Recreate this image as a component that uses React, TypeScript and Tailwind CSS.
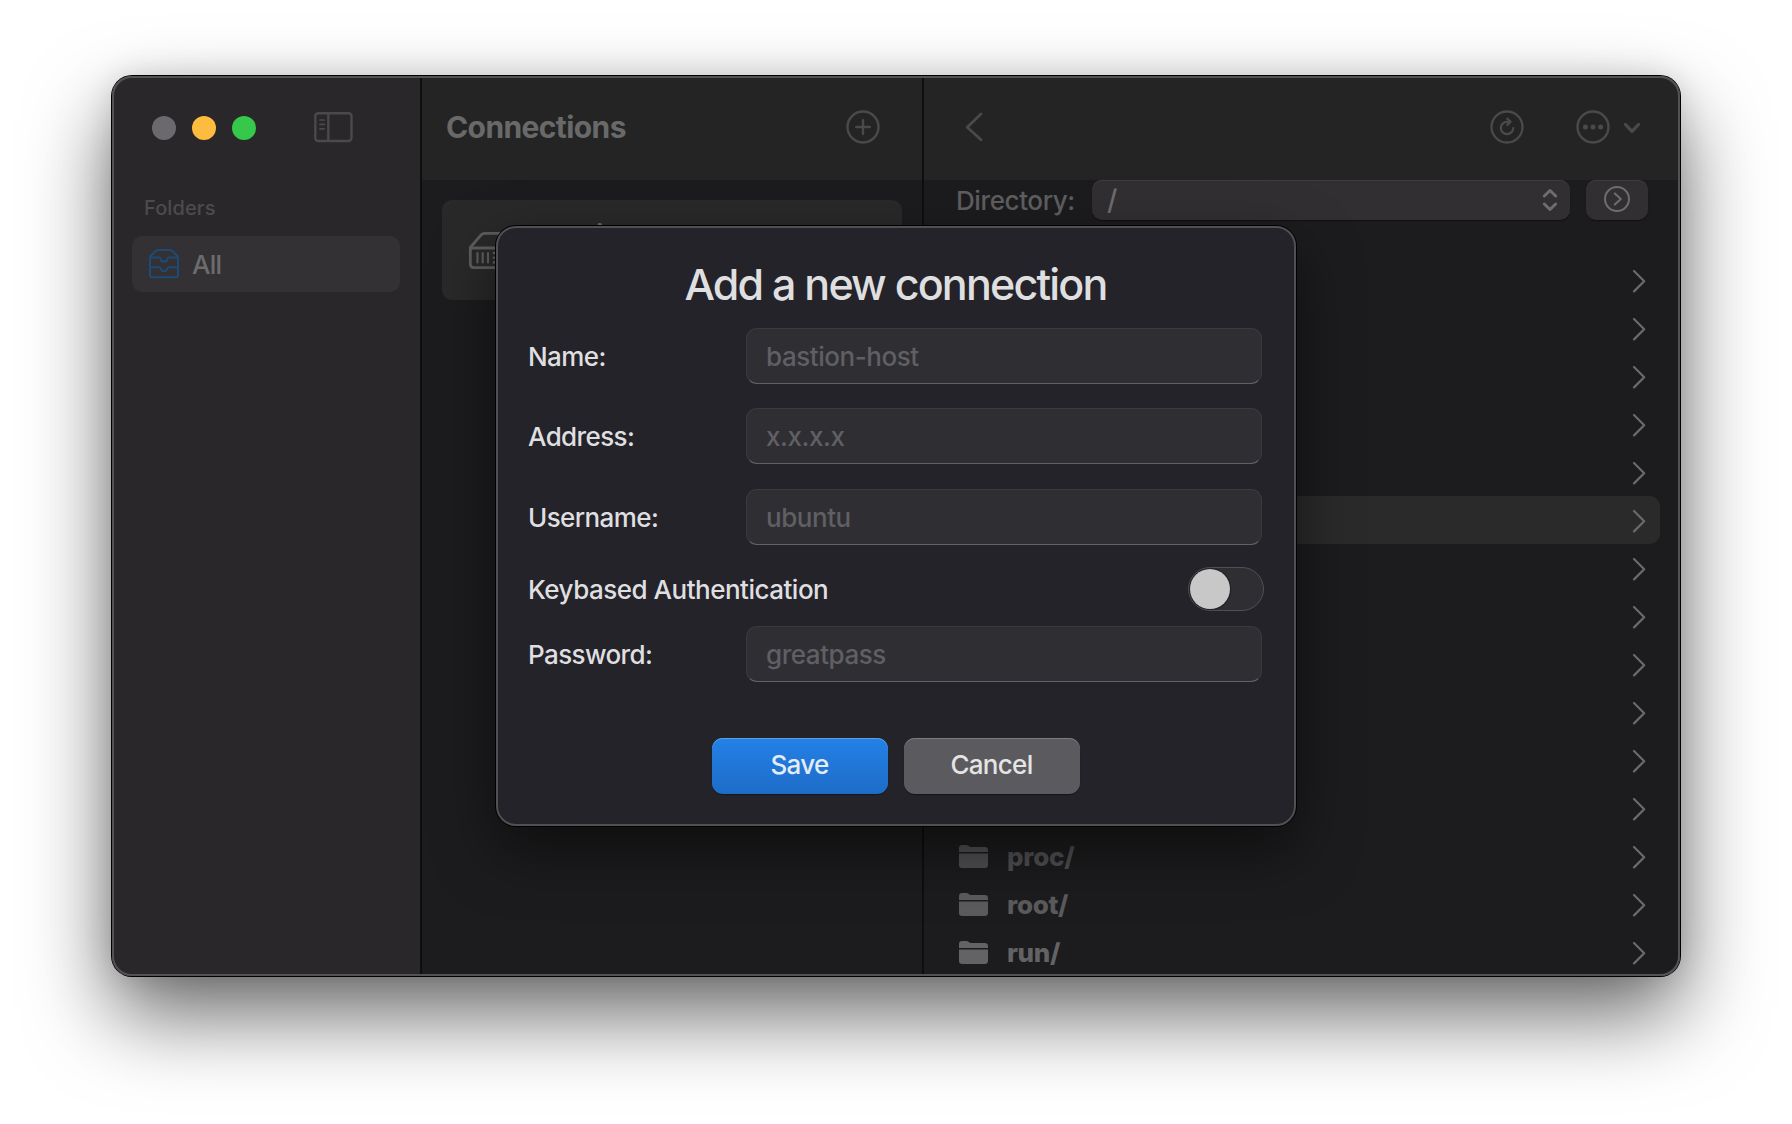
import type { ReactNode } from "react";

const stroke = {
  fill: "none",
  stroke: "currentColor",
  strokeLinecap: "round" as const,
  strokeLinejoin: "round" as const,
};

function SidebarIcon() {
  return (
    <svg width="40" height="32" viewBox="0 0 40 32" strokeWidth="2.4" {...stroke} className="text-[#4b494c]">
      <rect x="2.3" y="2.2" width="36.2" height="27.8" rx="3" />
      <path d="M15.300 2.2v27.8" strokeLinecap="butt" />
      <path d="M7 9h4.2M7 13.4h4.2M7 17.8h4.2" strokeWidth="1.7" />
    </svg>
  );
}

function TrayIcon() {
  return (
    <svg width="32" height="32" viewBox="0 0 32 32" strokeWidth="2.100" {...stroke} className="text-[#1f4a75]">
      <path d="M2 8.500 8 2.800Q9 2 10.300 2H21.700Q23 2 24 2.800L30 8.500V26.500Q30 29.200 27.300 29.200H4.700Q2 29.200 2 26.500Z" />
      <path d="M2 9.500h9.500c.6 0 .8.500.9 1.100.3 1.700 1.700 3 3.600 3s3.300-1.300 3.600-3c.1-.6.300-1.100.9-1.100H30" />
      <path d="M2 19.300h9.500c.6 0 .8.500 1 1 .5 1.700 1.800 2.900 3.500 2.900s3-1.200 3.500-2.900c.2-.5.400-1 1-1H30" />
    </svg>
  );
}

function PlusCircle() {
  return (
    <svg width="36" height="36" viewBox="0 0 36 36" strokeWidth="2.400" {...stroke} className="text-[#4a4a4b]">
      <circle cx="18" cy="18" r="15.500" />
      <path d="M18 11.200v13.600M11.200 18h13.600" />
    </svg>
  );
}

function RefreshCircle() {
  return (
    <svg width="36" height="36" viewBox="0 0 36 36" strokeWidth="2.300" {...stroke} className="text-[#4a4a4b]">
      <circle cx="18" cy="18" r="15.500" />
      <path d="M24.200 19a6.200 6.200 0 1 1-6.200-6.200h3" strokeWidth="2.200" />
      <path d="m18.200 9.600 3.400 3.200-3.400 3.300" strokeWidth="2.200" />
    </svg>
  );
}

function MoreCircle() {
  return (
    <svg width="36" height="36" viewBox="0 0 36 36" strokeWidth="2.400" {...stroke} className="text-[#4a4a4b]">
      <circle cx="18" cy="18" r="15.500" />
      <g fill="currentColor" stroke="none">
        <circle cx="10.400" cy="18" r="2.500" />
        <circle cx="18" cy="18" r="2.500" />
        <circle cx="25.600" cy="18" r="2.500" />
      </g>
    </svg>
  );
}

function ServerIcon() {
  return (
    <svg width="52" height="40" viewBox="0 0 52 40" strokeWidth="2.800" {...stroke} className="text-[#5d5d5e]">
      <path d="M2.300 17.500 12.300 5.800Q14 3.300 17 3.300H35Q38 3.300 39.700 5.800L49.700 17.500V34Q49.700 37.700 46 37.700H6Q2.300 37.700 2.300 34Z" />
      <path d="M2.300 18h47.400" />
      <path d="M9.500 23v9.500M14.700 23v9.500M20 23v9.500" strokeWidth="2.200" />
      <path d="M26 23v.1M26 27.700v.1M26 32.300v.1" strokeWidth="2.600" />
    </svg>
  );
}

function FolderIcon() {
  return (
    <svg className="mt-[2px]" width="29" height="24" viewBox="0 0 29 24" fill="currentColor">
      <path d="M0 7V3.200Q0 0 3.200 0H7.400Q8.800 0 9.800.900L10.500 1.500Q11.300 2 12.500 2H25.800Q29 2 29 5.200V7Z" />
      <path d="M0 8.600H29V19.800Q29 23 25.800 23H3.200Q0 23 0 19.800Z" />
    </svg>
  );
}

function RowChevron() {
  return (
    <svg width="14" height="24" viewBox="0 0 14 24" strokeWidth="2.200" {...stroke} className="ml-auto mt-[2px] text-[#6a696b]">
      <path d="m2 2 10.200 10.200L2 22.400" />
    </svg>
  );
}

function FileRow({ name, selected, tone }: { name?: string; selected?: boolean; tone: string }) {
  return (
    <div
      className={
        "flex h-12 shrink-0 items-center rounded-[10px] pl-[19px] pr-[14px] " + (selected ? "bg-[#2a2a2b] " : "") + tone
      }
    >
      <FolderIcon />
      {name && <span className="ml-[19px] text-[26px] font-extrabold tracking-[-0.3px]">{name}</span>}
      <RowChevron />
    </div>
  );
}

function Field({ label, placeholder }: { label: string; placeholder: string }) {
  return (
    <label className="flex h-14 items-center">
      <span className="w-[218px] pt-[2px] text-[26px] font-[450] leading-8 tracking-[-0.6px]">{label}</span>
      <input
        placeholder={placeholder}
        className="h-14 w-[516px] rounded-[11px] border border-[#3b3a3e] border-b-[#626166] bg-[#2f2e33] px-[19px] text-[26px] font-[450] tracking-[-0.45px] outline-none placeholder:text-[#605f64]"
      />
    </label>
  );
}

function PushButton({ primary, children }: { primary?: boolean; children: ReactNode }) {
  return (
    <button
      className={
        "h-14 w-44 rounded-[11px] pb-[4px] pr-px text-[26px] font-[450] tracking-[-0.7px] " +
        (primary
          ? "bg-linear-to-b from-[#2381e6] to-[#1e6cc8] text-[#e3ecf7] shadow-[inset_0_1px_0_#5b9fe8,0_1px_1px_rgba(0,0,0,0.4)]"
          : "bg-[#5b5a5e] text-[#e4e4e5] shadow-[inset_0_1px_0_#7c7b7f,0_1px_1px_rgba(0,0,0,0.4)]")
      }
    >
      {children}
    </button>
  );
}

function ConnectionDialog() {
  return (
    <div className="absolute left-[384px] top-[150px] flex h-[600px] w-[800px] flex-col rounded-[20px] border-2 border-[#505053] bg-[#242329] px-[30px] text-[#dfdfe0] shadow-[0_0_0_1px_#000,0_24px_60px_rgba(0,0,0,0.5)]">
      <h2 className="mt-[29px] h-[57px] pr-px text-center text-[43px] font-[450] leading-[54px] tracking-[-1.8px]">
        Add a new connection
      </h2>
      <div className="mt-[14px]">
        <Field label="Name:" placeholder="bastion-host" />
      </div>
      <div className="mt-6">
        <Field label="Address:" placeholder="x.x.x.x" />
      </div>
      <div className="mt-[25px]">
        <Field label="Username:" placeholder="ubuntu" />
      </div>
      <div className="mt-[22px] flex h-11 w-[736px] items-center justify-between">
        <span className="pt-[2px] text-[26px] font-[450] leading-8 tracking-[-0.5px]">Keybased Authentication</span>
        <span className="flex h-11 w-[76px] items-center rounded-full border border-[#504f53] bg-[#2f2e33] pl-px">
          <span className="size-10 rounded-full bg-[#c8c8c8] shadow-[0_0_2px_#000]" />
        </span>
      </div>
      <div className="mt-[15px]">
        <Field label="Password:" placeholder="greatpass" />
      </div>
      <div className="mt-14 flex justify-center gap-4">
        <PushButton primary>Save</PushButton>
        <PushButton>Cancel</PushButton>
      </div>
    </div>
  );
}

const files: { name?: string; tone: string }[] = [
  ...Array.from({ length: 12 }, () => ({ tone: "text-[#5d5c5f]" })),
  { name: "proc/", tone: "text-[#504f51]" },
  { name: "root/", tone: "text-[#5b5a5d]" },
  { name: "run/", tone: "text-[#636265]" },
];

export default function App() {
  return (
    <div className="h-[1124px] w-[1792px] overflow-hidden bg-white pl-[112px] pt-[76px] font-['Inter',sans-serif]">
      <div className="relative h-[900px] w-[1568px] rounded-[20px] shadow-[0_0_0_1px_#000,0_38px_84px_rgba(0,0,0,0.6),0_0_30px_rgba(0,0,0,0.12)]">
        <div className="flex h-full w-full overflow-hidden rounded-[20px] bg-[#1c1c1e]">
          <aside className="flex w-[308px] shrink-0 flex-col bg-[#29272a] px-5">
            <div className="flex h-[104px] items-center gap-4 pl-5">
              <span className="size-6 rounded-full bg-[#6b696d]" />
              <span className="size-6 rounded-full bg-[#fdbb40]" />
              <span className="size-6 rounded-full bg-[#35c84a]" />
              <span className="ml-[41px] pb-[2px]"><SidebarIcon /></span>
            </div>
            <div className="mt-3 h-8 pl-3 text-[20px] font-medium leading-[32px] tracking-[0.1px] text-[#4c4b4d]">Folders</div>
            <div className="mt-3 flex h-14 items-center gap-3 rounded-[10px] bg-[#333134] pl-4 text-[26px] font-[450] tracking-[-0.8px] text-[#6c6b6d]">
              <TrayIcon />
              <span>All</span>
            </div>
          </aside>
          <section className="flex w-[504px] shrink-0 flex-col border-x-2 border-[#0e0e0f]">
            <header className="flex h-[104px] items-center justify-between bg-[#242425] pb-[2px] pl-6 pr-[41px]">
              <h1 className="text-[30px] font-bold tracking-[-0.6px] text-[#69696a]">Connections</h1>
              <PlusCircle />
            </header>
            <div className="ml-5 mt-5 flex h-[100px] w-[460px] rounded-[10px] bg-[#29292a] pl-[26px]">
              <span className="mt-[30px]"><ServerIcon /></span>
              <span className="ml-[20px] mt-[19px] text-[26px] font-bold leading-[32px] tracking-[0.1px] text-[#69696a]">bastion-host</span>
            </div>
          </section>
          <section className="flex min-w-0 flex-1 flex-col">
            <header className="flex h-[104px] shrink-0 items-center bg-[#242425] pb-[2px] pl-[39px] pr-[39px] text-[#4a4a4b]">
              <svg width="24" height="32" viewBox="0 0 24 32" strokeWidth="2.800" {...stroke}>
                <path d="M18 3 4.200 16.200l13.800 12.600" />
              </svg>
              <span className="ml-auto"><RefreshCircle /></span>
              <span className="ml-[50px]"><MoreCircle /></span>
              <svg className="ml-[12px] mt-[2px]" width="18" height="14" viewBox="0 0 18 14" strokeWidth="3.200" {...stroke}>
                <path d="m2.500 3.500 6.500 6.800 6.500-6.800" />
              </svg>
            </header>
            <div className="flex h-10 shrink-0 items-center pl-8">
              <span className="w-[136px] text-[26px] font-[450] tracking-[-0.4px] text-[#5f5e60]">Directory:</span>
              <div className="flex h-10 w-[478px] items-center justify-between rounded-[10px] bg-[#322f32] pl-[15px] pr-3 text-[28px] text-[#6d6c6e] shadow-[inset_0_1px_0_#3d3c3e,0_1px_1px_rgba(0,0,0,0.4)]">
                <span className="font-medium leading-9">/</span>
                <svg width="16" height="24" viewBox="0 0 16 24" strokeWidth="3" {...stroke}>
                  <path d="m2.300 8 5.700-5.500 5.700 5.500M2.300 16l5.700 5.500 5.700-5.500" />
                </svg>
              </div>
              <div className="ml-4 flex h-10 w-[62px] items-center justify-center rounded-[10px] bg-[#322f32] pb-[2px] text-[#6d6c6e] shadow-[inset_0_1px_0_#3d3c3e,0_1px_1px_rgba(0,0,0,0.4)]">
                <svg width="28" height="28" viewBox="0 0 28 28" strokeWidth="2" {...stroke}>
                  <circle cx="14" cy="14" r="12" />
                  <path d="m11.800 8.400 6 5.600-6 5.600" />
                </svg>
              </div>
            </div>
            <div className="mt-9 flex flex-col pl-4 pr-5">
              {files.map((file, i) => (
                <FileRow key={i} name={file.name} selected={i === 5} tone={file.tone} />
              ))}
            </div>
          </section>
        </div>
        <ConnectionDialog />
        <div className="pointer-events-none absolute inset-0 rounded-[20px] border-2 border-[#525252]" />
      </div>
    </div>
  );
}
